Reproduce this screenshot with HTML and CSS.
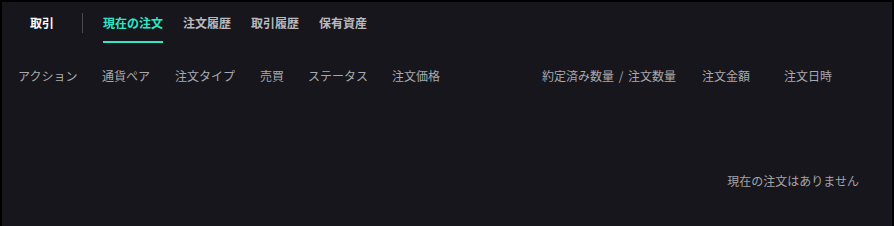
FILE: index.html
```html
<!DOCTYPE html>
<html lang="ja">

<head>
    <meta charset="utf-8">
    <meta name="viewport" content="width=device-width, initial-scale=1.0">
    <title>注文</title>
    <link rel="stylesheet" href="styles.css">
</head>

<body>
    <div class="panel">
        <div class="tabs">
            <div class="tab main">取引</div>
            <div class="skille"></div>
            <div class="tab valgt">現在の注文</div>
            <div class="tab">注文履歴</div>
            <div class="tab">取引履歴</div>
            <div class="tab">保有資産</div>
        </div>

        <div class="kolonner">
            <div>アクション</div>
            <div>通貨ペア</div>
            <div>注文タイプ</div>
            <div>売買</div>
            <div>ステータス</div>
            <div>注文価格</div>
            <div class="bred">約定済み数量 / 注文数量</div>
            <div>注文金額</div>
            <div>注文日時</div>
        </div>

        <p class="tom">現在の注文はありません</p>
    </div>
</body>

</html>
```

FILE: styles.css
```css
body {
    margin: 0;
    background-color: #000;
    font-family: "Noto Sans CJK JP", "Noto Sans", sans-serif;
}

.panel {
    margin: 2px 2px 0;
    height: 224px;
    background-color: #16161c;
    overflow: hidden;
}

/* TABS */

.tabs {
    display: flex;
    align-items: flex-start;
    padding-left: 28px;
}

.tab {
    font-size: 12px;
    font-weight: bold;
    line-height: 17px;
    padding: 12px 0 10px;
    border-bottom: 2px solid transparent;
    color: #b9b9be;
    margin-right: 20px;
}

.tab.main {
    color: #fff;
    margin-right: 28px;
}

.skille {
    width: 1px;
    height: 20px;
    margin-top: 11px;
    margin-right: 20px;
    background-color: #4a4a50;
}

.valgt {
    color: #2de8c8;
    border-bottom-color: #2de8c8;
}

/* TABEL */

.kolonner {
    display: grid;
    grid-template-columns: 84px 73px 85px 48px 84px 150px 160px 82px 1fr;
    padding-left: 16px;
    margin-top: 21px;
    font-size: 12px;
    line-height: 24px;
    color: #a8a9af;
}

.bred {
    word-spacing: 2px;
}

.tom {
    margin: 81px 0 0;
    padding-right: 33px;
    text-align: right;
    font-size: 12px;
    line-height: 24px;
    color: #a3a4aa;
}
```
